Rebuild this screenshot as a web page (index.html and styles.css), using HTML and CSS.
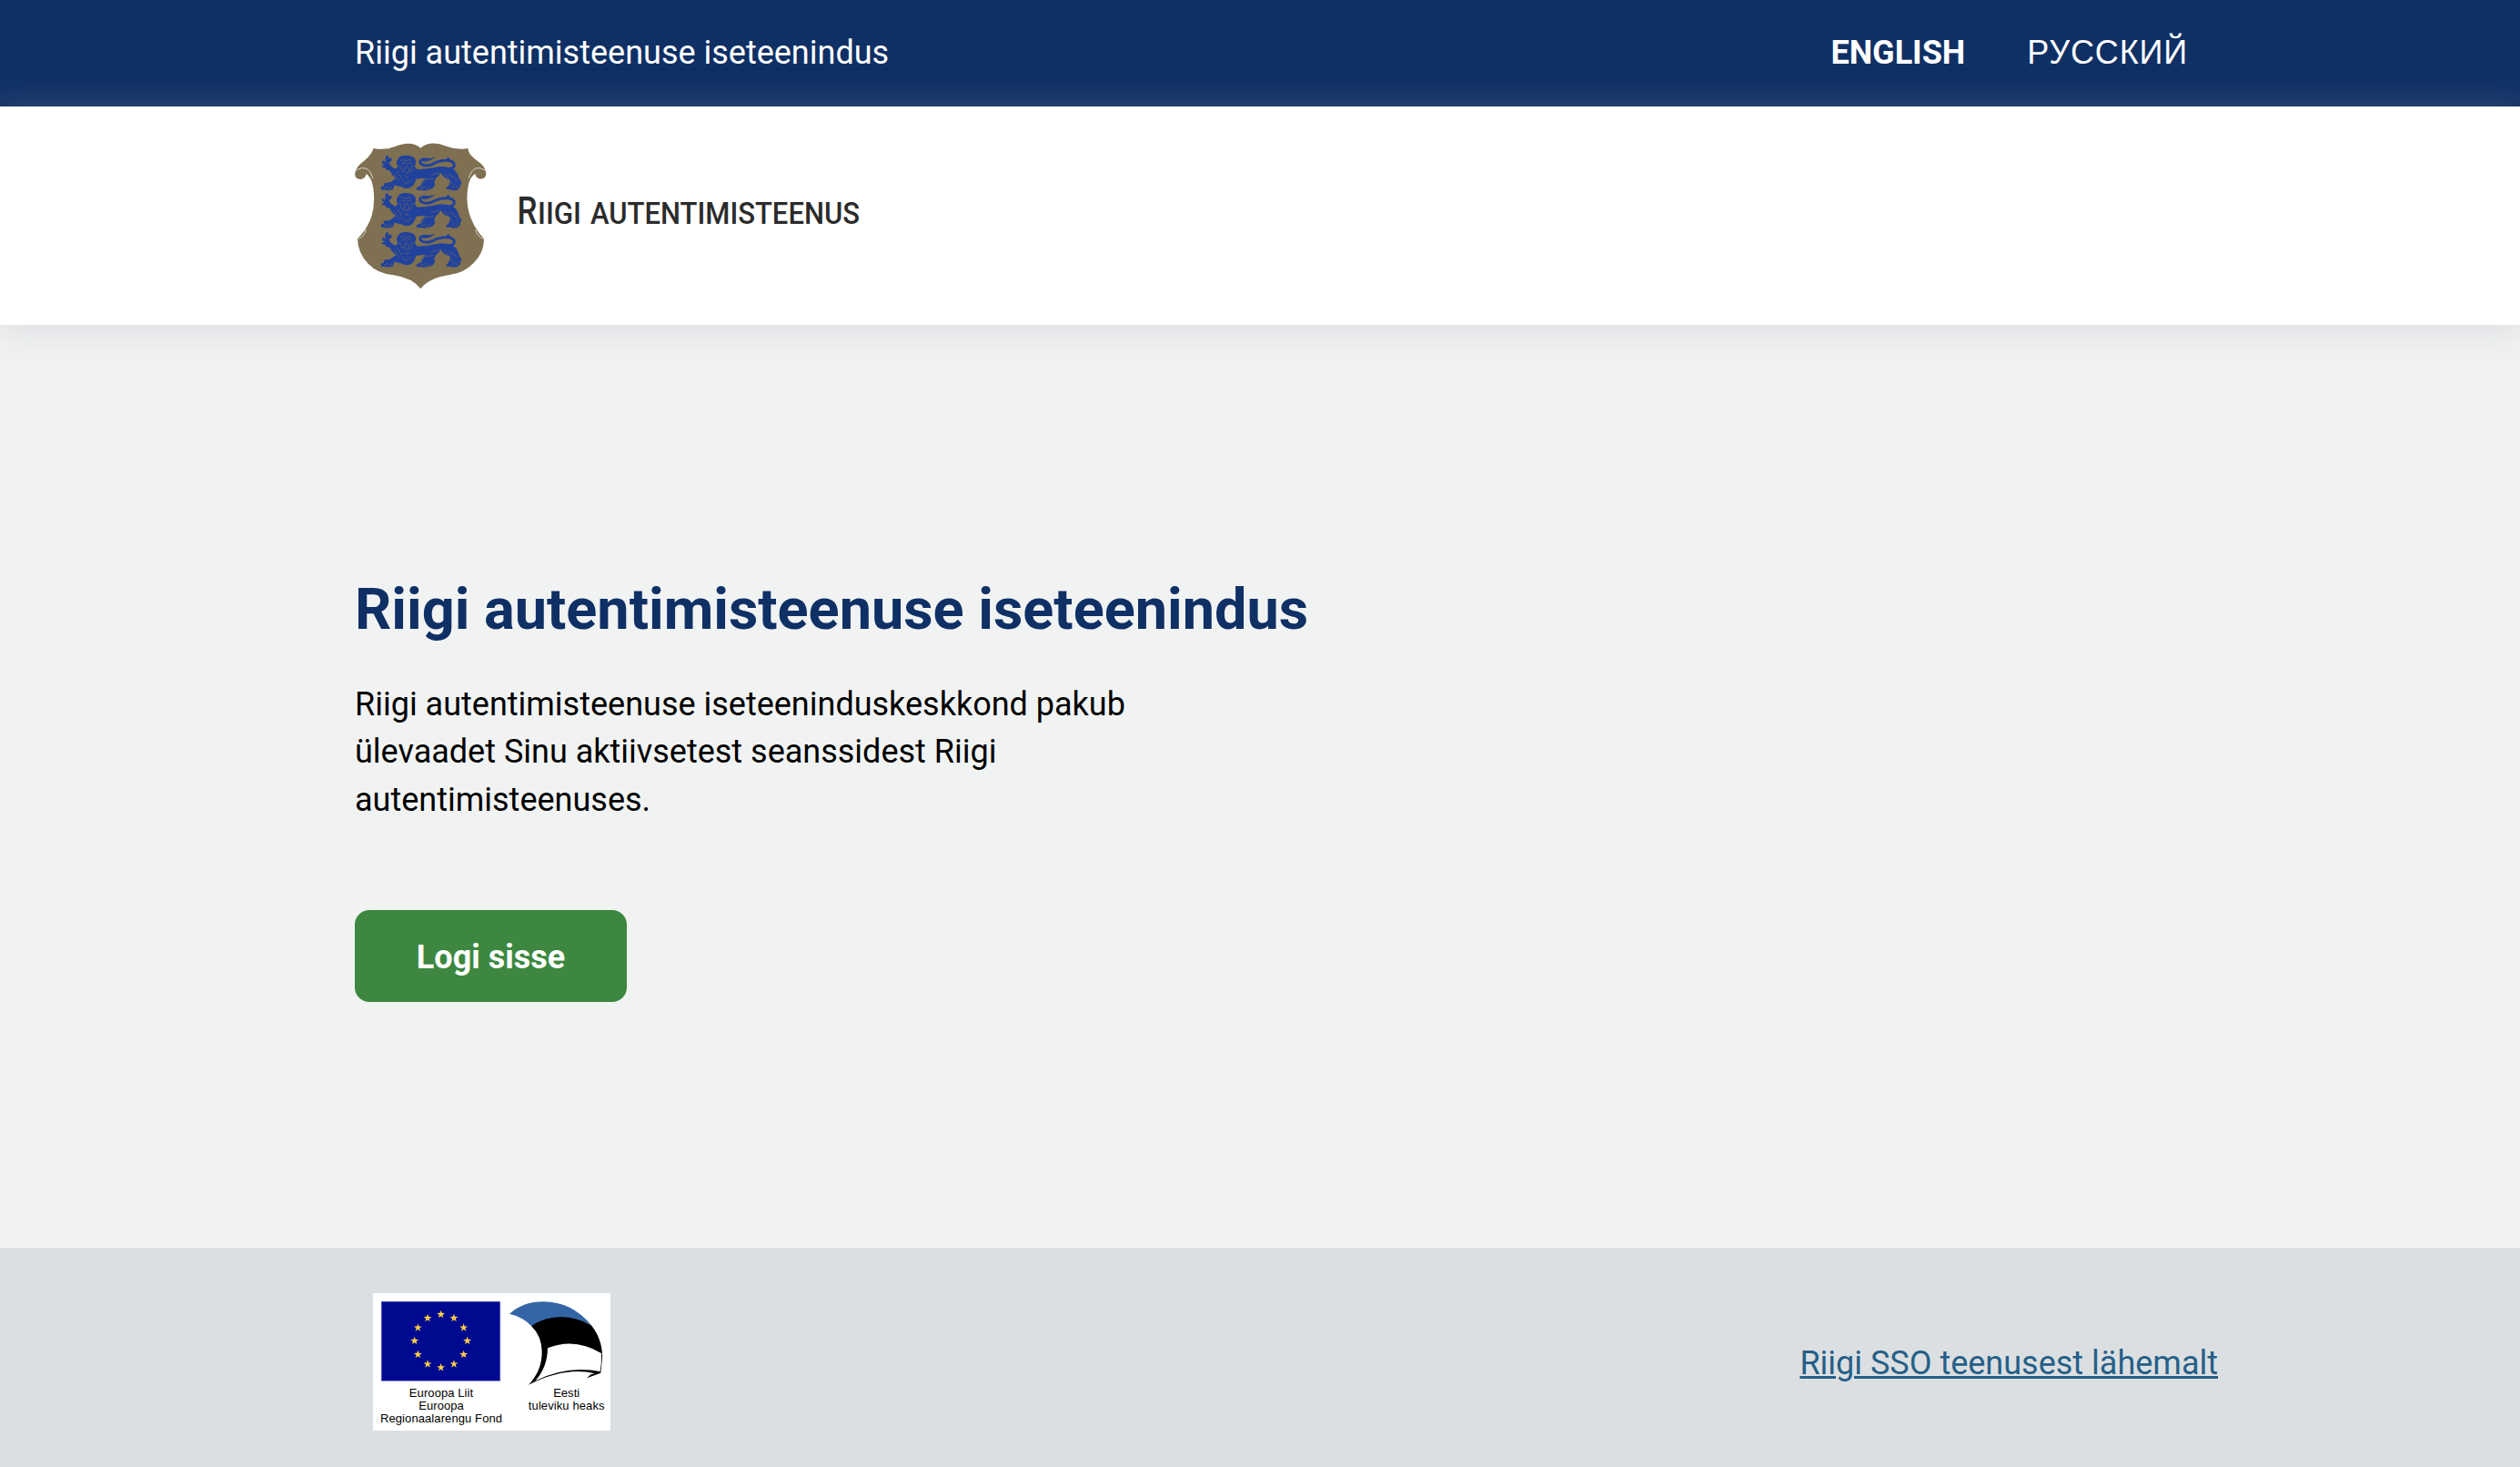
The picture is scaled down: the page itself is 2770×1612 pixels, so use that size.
FILE: index.html
```html
<!DOCTYPE html>
<html lang="et">
<head>
<meta charset="utf-8">
<title>Riigi autentimisteenuse iseteenindus</title>
<link rel="stylesheet" href="styles.css">
</head>
<body>
<div class="topbar">
  <div class="container topbar-row">
    <span class="topbar-title">Riigi autentimisteenuse iseteenindus</span>
    <nav class="languages">
      <a class="lang lang-en" href="#">ENGLISH</a>
      <a class="lang lang-ru" href="#">РУССКИЙ</a>
    </nav>
  </div>
</div>
<header class="header">
  <div class="container brand">
    <svg class="crest" viewBox="60 49 435 483" aria-hidden="true">
      <defs>
        <g id="lion" transform="translate(135 75)">
          <path fill="#21429c" d="M30 16Q37 13 37 27Q46 19 47 27Q47 36 37 38Q42 51 50 55Q58 63 64 56Q69 50 63 42Q61 34 67 28Q71 15 95 15Q121 16 125 30Q128 43 122 51Q128 56 130 62Q165 61 200 53Q222 50 242 57Q262 65 267 85Q269 97 277 102Q278 111 273 113Q273 126 266 125Q264 133 254 130Q247 134 243 128L227 128Q226 120 235 115Q238 107 239 96Q217 89 208 72Q203 84 193 90Q187 99 187 105Q193 113 185 119Q183 127 172 127Q169 132 159 130Q150 134 147 129Q133 132 128 127Q127 120 139 117Q145 112 147 101Q151 95 160 90Q140 90 126 94Q124 110 112 119Q96 129 77 118Q63 116 55 112Q57 119 52 123Q51 131 43 128Q39 134 33 129Q26 134 23 128Q11 132 11 123Q12 116 21 116Q18 107 28 106Q42 108 52 97L60 91Q46 80 40 65Q26 65 26 56Q14 56 14 51Q16 47 24 48Q14 42 14 36Q19 30 27 38Q23 20 30 16Z"/>
          <g fill="none" stroke="#21429c" stroke-width="9" stroke-linecap="round">
            <path d="M236 60Q254 58 253 44Q247 31 225 32Q203 32 180 45Q157 54 143 43Q135 33 150 28L167 29"/>
          </g>
          <path fill="#21429c" d="M147 25Q165 28 189 21Q177 34 151 36ZM226 33Q228 20 235 22Q240 26 236 35Z"/>
          <g fill="none" stroke="#7e7051" stroke-width="2" stroke-linecap="round" opacity=".85">
            <path d="M77 32Q86 25 94 34Q101 25 112 32M80 41Q86 36 92 42M98 42Q104 36 110 41M73 48Q75 63 84 70M116 47Q115 63 107 72M90 54Q96 47 101 54L105 67Q96 79 87 67ZM91 82L96 90L101 82M65 69L80 91M56 76L70 99M82 98Q96 119 111 97M138 105Q161 91 183 92M153 99L144 116M222 76Q239 100 247 111M237 80Q255 85 263 100M178 79L202 74M22 123L33 119M37 126L47 120M143 124L158 119M161 127L173 120M245 122L255 115M258 124L268 114"/>
          </g>
        </g>
      </defs>
      <path fill="#7e7051" d="M121 67Q161 74 190 62Q246 38 277 66Q309 39 362 60Q399 74 433 67Q435 89 464 108Q490 125 493 148Q494 168 474 168Q459 165 457 151Q440 160 434 191Q424 245 441 293Q455 333 486 365Q487 410 451 446Q423 477 369 485Q306 494 277 530Q249 494 188 485Q134 479 104 447Q70 413 69 365Q101 333 115 292Q128 250 121 198Q116 163 98 151Q95 168 79 169Q58 167 61 149Q64 126 91 108Q119 84 121 67Z"/>
      <g fill="none" stroke="#d6d1c5" stroke-width="3">
        <path d="M65 139Q105 115 120 166M490 139Q450 115 435 166M71 366Q92 358 97 334M485 366Q463 358 458 334"/>
      </g>
      <use href="#lion"/>
      <use href="#lion" y="124"/>
      <use href="#lion" y="253"/>
    </svg>
    <svg class="wordmark" viewBox="560 202 390 70">
      <g class="wordmark-text">
        <text x="568.5" y="245.5" font-size="42" textLength="22" lengthAdjust="spacingAndGlyphs">R</text>
        <text x="591" y="245.5" font-size="33" textLength="48" lengthAdjust="spacingAndGlyphs">IIGI</text>
        <text x="649" y="245.5" font-size="33" textLength="296" lengthAdjust="spacingAndGlyphs">AUTENTIMISTEENUS</text>
      </g>
    </svg>
  </div>
</header>
<main class="main">
  <div class="container">
    <h1 class="heading">Riigi autentimisteenuse iseteenindus</h1>
    <p class="lead">Riigi autentimisteenuse iseteeninduskeskkond pakub ülevaadet Sinu aktiivsetest seanssidest Riigi autentimisteenuses.</p>
    <a class="login" href="#">Logi sisse</a>
  </div>
</main>
<footer class="footer">
  <div class="container footer-row">
    <svg class="funding" viewBox="30 33 783 453">
      <defs><path id="star" fill="#ffcf45" d="M0-14L3.3-4.5L13.3-4.3L5.3 1.7L8.2 11.3L0 5.6L-8.2 11.3L-5.3 1.7L-13.3-4.3L-3.3-4.5Z"/></defs>
      <path fill="#fff" d="M30 33h783v453H30z"/>
      <path fill="#000a90" stroke="#4950b0" stroke-width="1.5" d="M58 61h391v261H58z"/>
      <use href="#star" x="254" y="103"/><use href="#star" x="297" y="115"/>
      <use href="#star" x="329" y="147"/><use href="#star" x="341" y="190"/>
      <use href="#star" x="329" y="235"/><use href="#star" x="297" y="267"/>
      <use href="#star" x="254" y="278"/><use href="#star" x="210" y="267"/>
      <use href="#star" x="178" y="235"/><use href="#star" x="167" y="190"/>
      <use href="#star" x="178" y="147"/><use href="#star" x="210" y="115"/>
      <path fill="#3465a6" d="M480 101Q525 61 592 61Q686 61 750 139Q650 90 552 141Q524 111 480 101Z"/>
      <path d="M552 141Q596 111 650 111Q706 113 750 139Q792 194 785 258L781 296L735 313L748 301L762 298Q665 274 543 335Q588 288 587 225Q586 174 552 141Z"/>
      <path fill="#fff" d="M606 214Q696 178 783 231Q784 264 779 291Q670 270 565 322Q605 279 606 214Z"/>
      <g class="funding-text">
        <text x="255" y="376" textLength="211">Euroopa Liit</text>
        <text x="255" y="417" textLength="149">Euroopa</text>
        <text x="255" y="458" textLength="402">Regionaalarengu Fond</text>
        <text x="668" y="376" textLength="87">Eesti</text>
        <text x="668" y="417" textLength="251">tuleviku heaks</text>
      </g>
    </svg>
    <a class="more" href="#">Riigi SSO teenusest lähemalt</a>
  </div>
</footer>
</body>
</html>
```
FILE: styles.css
```css
* { box-sizing: border-box; }
body {
  margin: 0;
  min-height: 1612px;
  display: flex;
  flex-direction: column;
  background: #f1f3f3;
  color: #000;
  font: 36px/52.4px Roboto, sans-serif;
}
.container { width: 2048px; margin-left: 390px; }
.topbar { height: 117px; background: #0f3065; color: #fff; }
.topbar-row {
  height: 117px;
  display: flex;
  align-items: center;
  justify-content: space-between;
}
.languages { display: flex; gap: 68px; padding-right: 33px; }
.lang { color: #fff; text-decoration: none; }
.lang-en { font-weight: 700; }
.lang-ru { font-family: "Liberation Sans", sans-serif; letter-spacing: .85px; }
.header {
  position: relative;
  height: 240px;
  background: #fff;
  box-shadow: 0 2px 36px 6px rgba(150, 150, 170, .23);
}
.brand { height: 240px; display: flex; align-items: center; }
.crest { width: 145px; height: 161px; }
.wordmark { width: 390px; height: 70px; margin-left: 25px; overflow: visible; }
.wordmark-text {
  font-family: Roboto, sans-serif;
  font-weight: 500;
  fill: #2b2b2b;
}
.main { flex: 1; padding-top: 268px; }
.heading {
  margin: 0;
  color: #0f3065;
  font-size: 63px;
  line-height: 90px;
  font-weight: 700;
}
.lead { width: 900px; margin: 33px 0 0; }
.login {
  display: inline-flex;
  align-items: center;
  justify-content: center;
  width: 299px;
  height: 101px;
  margin-top: 95px;
  padding-top: 2px;
  border-radius: 16px;
  background: #3d8741;
  color: #fff;
  font-weight: 700;
  text-decoration: none;
}
.footer { height: 241px; background: #dbdfe2; }
.footer-row {
  height: 241px;
  padding: 9px 0 0 20px;
  display: flex;
  align-items: center;
  justify-content: space-between;
}
.funding { width: 261px; height: 151px; }
.funding-text {
  font-family: "Liberation Sans", Arial, sans-serif;
  font-size: 39px;
  text-anchor: middle;
}
.more {
  padding-top: 5px;
  color: #265f87;
  text-decoration: underline;
  text-decoration-thickness: 3px;
}
```
